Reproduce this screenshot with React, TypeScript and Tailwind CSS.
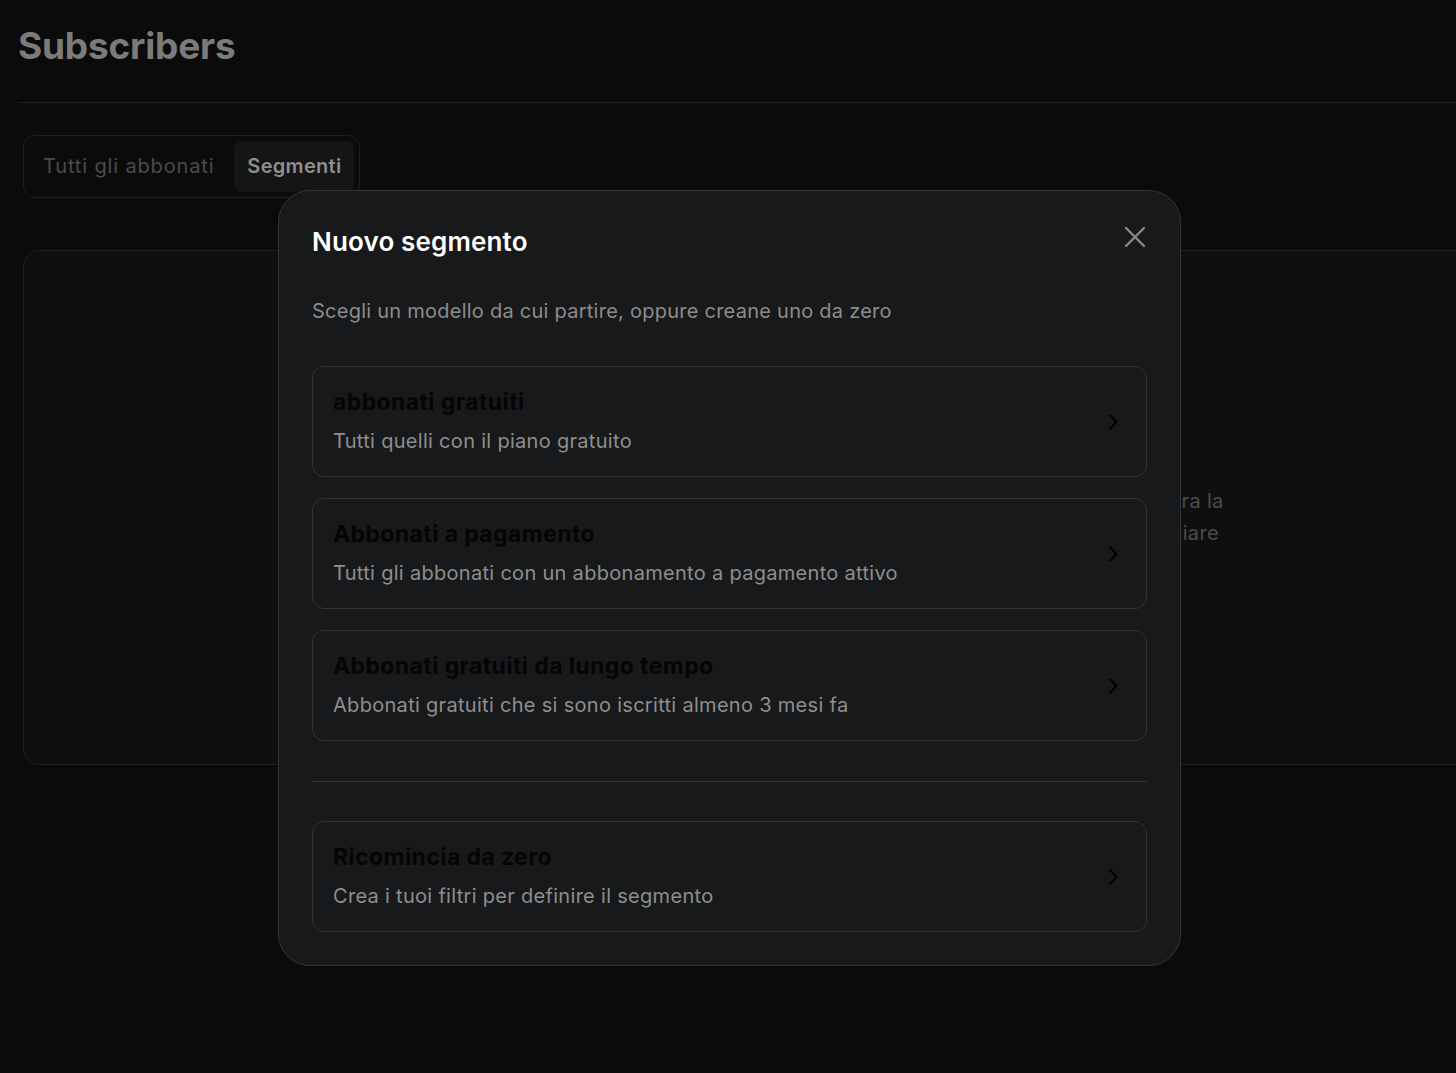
import { useState } from 'react';

interface Template {
  id: string;
  title: string;
  description: string;
}

const templates: Template[] = [
  { id: 'free', title: 'abbonati gratuiti', description: 'Tutti quelli con il piano gratuito' },
  { id: 'paid', title: 'Abbonati a pagamento', description: 'Tutti gli abbonati con un abbonamento a pagamento attivo' },
  { id: 'long', title: 'Abbonati gratuiti da lungo tempo', description: 'Abbonati gratuiti che si sono iscritti almeno 3 mesi fa' },
];

function Chevron() {
  return (
    <svg width="12" height="20" viewBox="0 0 12 20" fill="none" className="shrink-0">
      <path d="M3 3l6.5 7L3 17" stroke="#000" strokeWidth="2" strokeLinecap="round" strokeLinejoin="round" />
    </svg>
  );
}

function TemplateCard({ title, description }: { title: string; description: string }) {
  return (
    <button className="flex w-full items-center justify-between rounded-[12px] border border-[#333437] bg-[#18191b] pl-5 pr-[27px] pt-[21px] pb-[21px] text-left">
      <div className="flex flex-col gap-[11px]">
        <span className="text-[23px] leading-[28px] font-bold tracking-[0.4px] text-[#050505]">{title}</span>
        <span className="text-[20px] leading-[28px] tracking-[0.3px] text-[#8e8e8e]">{description}</span>
      </div>
      <Chevron />
    </button>
  );
}

export default function App() {
  const [tab] = useState('segments');

  return (
    <div className="relative min-h-[1073px] overflow-hidden bg-[#0b0b0b] font-['Inter','Liberation_Sans',sans-serif]">
      {/* page underneath */}
      <div className="pl-[18px]">
        <h1 className="pt-[22px] text-[37px] leading-[48px] font-bold tracking-[-0.2px] text-[#7b7b7b]">Subscribers</h1>
        <div className="mt-[32px] h-px bg-[#1f1f1f]" />

        <div className="mt-[32px] ml-[5px] inline-flex items-center rounded-[12px] border border-[#1e1e1e] p-[5px]">
          <span className="pl-[14px] pr-[20px] text-[20px] leading-[51px] tracking-[0.85px] text-[#4b4b4b]">Tutti gli abbonati</span>
          <span
            className={`rounded-[8px] pl-[13px] pr-[13px] text-[20px] leading-[51px] font-semibold tracking-[0.3px] text-[#8e8e8e] ${tab === 'segments' ? 'bg-[#141515]' : ''}`}
          >
            Segmenti
          </span>
        </div>

        <div className="mt-[52px] ml-[5px] -mr-[40px] flex h-[515px] flex-col items-center justify-center rounded-[16px] border border-[#1d1e1e] bg-[#0e1010] pt-[18px]">
          <p className="text-center text-[20px] leading-[32px] tracking-[0.3px] text-[#4b4b4b] whitespace-nowrap">
            Crea segmenti per raggruppare gli abbonati in base al piano o alla data di iscrizione, poi filtra la
            <br />
            lista degli abbonati per inviare email mirate a ciascun gruppo. Crea il tuo segmento per iniziare
          </p>
        </div>
      </div>

      {/* modal */}
      <div className="absolute inset-0 flex items-start justify-center pt-[190px] pl-[3px]">
        <div className="w-[903px] rounded-[32px] border border-[#333436] bg-[#18191b] px-[33px] pt-[33px] pb-[33px]">
          <div className="flex items-start justify-between">
            <h2 className="text-[26px] leading-[36px] font-semibold tracking-[0.15px] text-white">Nuovo segmento</h2>
            <button className="mt-[1px] mr-0 p-[1px]">
              <svg width="22" height="22" viewBox="0 0 22 22" fill="none">
                <path d="M2 2l18 18M20 2L2 20" stroke="#8a8a8a" strokeWidth="2.3" strokeLinecap="round" />
              </svg>
            </button>
          </div>
          <p className="mt-[37px] text-[20px] leading-[28px] tracking-[0.25px] text-[#8c8c8c]">
            Scegli un modello da cui partire, oppure creane uno da zero
          </p>

          <div className="mt-[41px] flex flex-col gap-[21px]">
            {templates.map((t) => (
              <TemplateCard key={t.id} title={t.title} description={t.description} />
            ))}
          </div>

          <div className="mt-[40px] mb-[39px] h-px bg-[#333437]" />

          <TemplateCard title="Ricomincia da zero" description="Crea i tuoi filtri per definire il segmento" />
        </div>
      </div>
    </div>
  );
}
